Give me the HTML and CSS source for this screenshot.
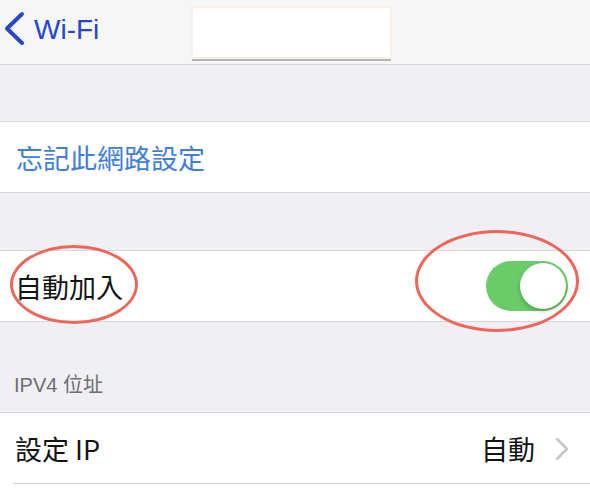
FILE: index.html
```html
<!DOCTYPE html>
<html lang="zh-Hant">
<head>
    <meta charset="UTF-8">
    <meta name="viewport" content="width=device-width, initial-scale=1.0">
    <title>Wi-Fi</title>
    <link rel="stylesheet" href="styles.css">
</head>
<body>

    <!-- Navigation bar -->
    <div class="nav-bar">
        <a class="back-link" href="#">
            <svg class="back-icon" width="24" height="36" viewBox="0 0 24 36">
                <path d="M20 3 L5 17.5 L20 32" fill="none" stroke="#2447cc" stroke-width="4" stroke-linecap="round" stroke-linejoin="round"/>
            </svg>
            <span>Wi-Fi</span>
        </a>
        <div class="title-cover"></div>
    </div>

    <div class="group-gap"></div>

    <div class="group">
        <div class="row">
            <span class="row-action">忘記此網路設定</span>
        </div>
    </div>

    <div class="group-gap short"></div>

    <div class="group">
        <div class="row">
            <span class="row-label">自動加入</span>
            <div class="switch on">
                <div class="switch-knob"></div>
            </div>
        </div>
    </div>

    <div class="group-header">IPV4 位址</div>

    <div class="group open">
        <div class="row inset">
            <span class="row-label">設定 IP</span>
            <span class="row-value">
                自動
                <svg class="chevron" width="14" height="22" viewBox="0 0 14 22">
                    <path d="M2 1 L12 11 L2 21" fill="none" stroke="#c4c4c9" stroke-width="2.5" stroke-linecap="round" stroke-linejoin="round"/>
                </svg>
            </span>
        </div>
    </div>

    <!-- Annotation marks -->
    <div class="mark mark-left"></div>
    <div class="mark mark-right"></div>

</body>
</html>
```

FILE: styles.css
```css
* {
    margin: 0;
    padding: 0;
    box-sizing: border-box;
}

body {
    font-family: "Liberation Sans", "Noto Sans CJK TC", sans-serif;
    background-color: #efeff4;
    color: #111;
    width: 590px;
    height: 499px;
    overflow: hidden;
    position: relative;
    display: flex;
    flex-direction: column;
}

/* Navigation bar */
.nav-bar {
    height: 65px;
    flex-shrink: 0;
    background-color: #f6f6f7;
    border-bottom: 1px solid #d6d6da;
    display: flex;
    align-items: flex-start;
}

.back-link {
    display: flex;
    align-items: center;
    gap: 8px;
    padding: 11px 0 0 2px;
    color: #2447cc;
    text-decoration: none;
    font-size: 28px;
    height: 47px;
}

.back-link span {
    line-height: 1;
    padding-top: 2px;
}

.title-cover {
    width: 201px;
    height: 53px;
    margin: 6px 0 0 92px;
    background-color: #fff;
    border: 2px solid #f8efe9;
    box-shadow: 0 3px 0 -1px #b4b4b6;
}

/* Gaps between groups */
.group-gap {
    height: 56px;
    flex-shrink: 0;
}

.group-gap.short {
    height: 57px;
}

.group {
    flex-shrink: 0;
    background-color: #fff;
    border-top: 1px solid #d6d6da;
    border-bottom: 1px solid #d6d6da;
}

/* Last group runs off the bottom of the screen */
.group.open {
    flex: 1;
    border-bottom: none;
}

.row {
    height: 70px;
    display: flex;
    align-items: center;
    justify-content: space-between;
    padding: 0 20px 0 15px;
    font-family: "Noto Sans CJK TC", "Liberation Sans", sans-serif;
    font-size: 27px;
}

.row.inset {
    padding-right: 21px;
    height: 71px;
    border-bottom: 1px solid #d2d2d6;
    margin-left: 13px;
    padding-left: 2px;
}

.row-action {
    color: #3f7ed9;
    padding-left: 1px;
}

.row-label {
    color: #141414;
}

.row-value {
    display: flex;
    align-items: center;
    gap: 20px;
    color: #141414;
}

.chevron {
    margin-top: 2px;
}

/* Toggle switch */
.switch {
    width: 82px;
    height: 50px;
    border-radius: 25px;
    background-color: #6acb69;
    position: relative;
    margin-right: 2px;
}

.switch-knob {
    position: absolute;
    top: 2px;
    right: 2px;
    width: 46px;
    height: 46px;
    border-radius: 50%;
    background-color: #fff;
    box-shadow: 0 2px 4px rgba(0, 0, 0, 0.25);
}

/* Section header */
.group-header {
    height: 90px;
    flex-shrink: 0;
    padding: 0 0 14px 14px;
    display: flex;
    align-items: flex-end;
    font-family: "Liberation Sans", "Noto Sans CJK TC", sans-serif;
    font-size: 20px;
    color: #6d6d72;
}

/* Red annotation ellipses drawn over the screen */
.mark {
    position: absolute;
    border: 3px solid #ef6558;
    border-radius: 50%;
}

.mark-left {
    left: 10px;
    top: 245px;
    width: 128px;
    height: 79px;
}

.mark-right {
    left: 415px;
    top: 230px;
    width: 164px;
    height: 102px;
}
```
